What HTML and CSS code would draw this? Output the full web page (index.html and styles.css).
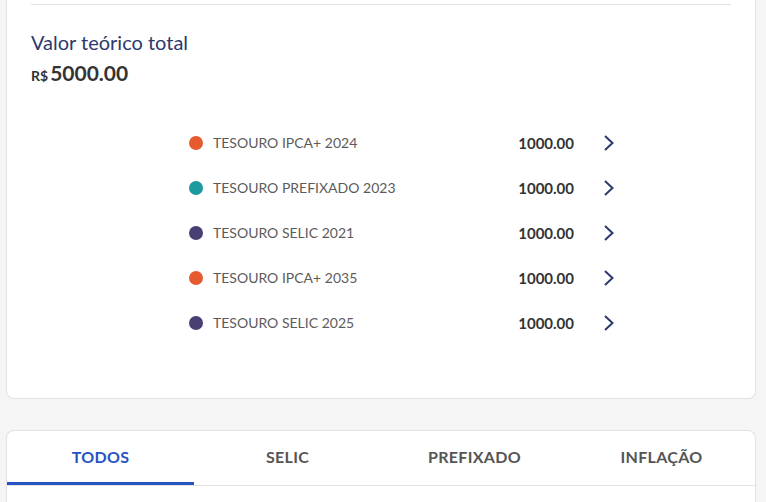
FILE: index.html
```html
<!DOCTYPE html>
<html lang="pt-BR">
<head>
<meta charset="utf-8">
<title>Carteira</title>
<link rel="stylesheet" href="styles.css">
</head>
<body>
<div class="page">
  <section class="card summary">
    <div class="divider"></div>
    <h2 class="title">Valor teórico total</h2>
    <div class="total"><span class="cur">R$</span><span class="amount">5000.00</span></div>
    <ul class="list">
      <li class="row"><span class="dot orange"></span><span class="name">TESOURO IPCA+ 2024</span><span class="value">1000.00</span><svg class="chev" viewBox="0 0 12 18" width="12" height="18"><path d="M2 2 L9.5 9 L2 16" fill="none" stroke="#2b3a6e" stroke-width="2"/></svg></li>
      <li class="row"><span class="dot teal"></span><span class="name">TESOURO PREFIXADO 2023</span><span class="value">1000.00</span><svg class="chev" viewBox="0 0 12 18" width="12" height="18"><path d="M2 2 L9.5 9 L2 16" fill="none" stroke="#2b3a6e" stroke-width="2"/></svg></li>
      <li class="row"><span class="dot purple"></span><span class="name">TESOURO SELIC 2021</span><span class="value">1000.00</span><svg class="chev" viewBox="0 0 12 18" width="12" height="18"><path d="M2 2 L9.5 9 L2 16" fill="none" stroke="#2b3a6e" stroke-width="2"/></svg></li>
      <li class="row"><span class="dot orange"></span><span class="name">TESOURO IPCA+ 2035</span><span class="value">1000.00</span><svg class="chev" viewBox="0 0 12 18" width="12" height="18"><path d="M2 2 L9.5 9 L2 16" fill="none" stroke="#2b3a6e" stroke-width="2"/></svg></li>
      <li class="row"><span class="dot purple"></span><span class="name">TESOURO SELIC 2025</span><span class="value">1000.00</span><svg class="chev" viewBox="0 0 12 18" width="12" height="18"><path d="M2 2 L9.5 9 L2 16" fill="none" stroke="#2b3a6e" stroke-width="2"/></svg></li>
    </ul>
  </section>
  <section class="card tabs-card">
    <nav class="tabs">
      <a class="tab active">TODOS</a>
      <a class="tab">SELIC</a>
      <a class="tab">PREFIXADO</a>
      <a class="tab">INFLAÇÃO</a>
    </nav>
  </section>
</div>
</body>
</html>
```
FILE: styles.css
```css
html, body {
  margin: 0;
  padding: 0;
  background: #f4f5f4;
  font-family: "Lato", "Noto Sans", sans-serif;
  overflow: hidden;
}
.page {
  padding: 0 10px 0 6px;
  display: flex;
  flex-direction: column;
  gap: 31px;
}
.card {
  background: #fff;
  border: 1px solid #e1e2e1;
}
.summary {
  border-top: none;
  border-radius: 0 0 8px 8px;
  padding: 4px 24px 53px;
}
.divider {
  height: 1px;
  background: #e2e3e2;
}
.title {
  margin: 24px 0 0;
  font-size: 20px;
  line-height: 26px;
  font-weight: 400;
  color: #2c3a6c;
}
.total {
  margin-top: 5px;
  display: flex;
  align-items: baseline;
  color: #333;
  line-height: 26px;
}
.cur {
  font-size: 14px;
  font-weight: 700;
  margin-right: 2px;
}
.amount {
  font-size: 21px;
  font-weight: 700;
}
.list {
  list-style: none;
  margin: 31px auto 0;
  padding: 0;
  width: 384px;
}
.row {
  display: flex;
  align-items: center;
  height: 45px;
  margin-right: -42px;
}
.dot {
  width: 14px;
  height: 14px;
  border-radius: 50%;
  margin-right: 10px;
  flex: none;
}
.orange { background: #e55a2e; }
.teal { background: #1b9aa0; }
.purple { background: #4a3f73; }
.name {
  flex: 1;
  font-size: 14px;
  color: #5b5b5b;
}
.value {
  font-size: 15px;
  font-weight: 700;
  color: #333;
}
.chev {
  margin-left: 29px;
  flex: none;
}
.tabs-card {
  border-radius: 8px 8px 0 0;
  border-bottom: none;
  height: 80px;
}
.tabs {
  display: grid;
  grid-template-columns: repeat(4, 1fr);
  border-bottom: 1px solid #e2e3e2;
}
.tab {
  height: 51px;
  display: flex;
  align-items: center;
  justify-content: center;
  font-size: 16px;
  font-weight: 700;
  letter-spacing: 0.3px;
  color: #555;
  border-bottom: 3px solid transparent;
}
.tab.active {
  color: #2553c1;
  border-bottom-color: #2553c1;
}
```
